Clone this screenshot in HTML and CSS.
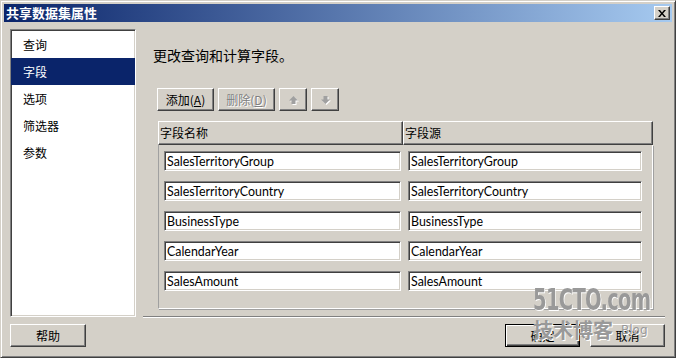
FILE: index.html
```html
<!DOCTYPE html>
<html lang="zh-CN">
<head>
  <meta charset="UTF-8" />
  <meta name="viewport" content="width=device-width, initial-scale=1.0"/>
  <title>共享数据集属性</title>
  <link rel="stylesheet" href="styles.css">
</head>
<body>
  <div class="window">
    <div class="titlebar">
      <span class="title">共享数据集属性</span>
      <button class="close" aria-label="关闭">
        <svg width="8" height="7" viewBox="0 0 8 7"><path d="M0 0h2l2 2.5 2-2.5h2l-3 3.5 3 3.5h-2l-2-2.5-2 2.5h-2l3-3.5z" fill="#000"/></svg>
      </button>
    </div>

    <div class="main">
      <ul class="nav">
        <li>查询</li>
        <li class="active">字段</li>
        <li>选项</li>
        <li>筛选器</li>
        <li>参数</li>
      </ul>

      <section class="panel">
        <h2 class="heading">更改查询和计算字段。</h2>

        <div class="toolbar">
          <button class="btn btn-tool">添加(<u>A</u>)</button>
          <button class="btn btn-tool" disabled>删除(<u>D</u>)</button>
          <button class="btn btn-arrow" disabled>
            <svg width="9" height="8" viewBox="0 0 9 8"><path d="M4.5 0 9 4.5H6.5V8h-4V4.5H0z" fill="#a0a0a0"/></svg>
          </button>
          <button class="btn btn-arrow" disabled>
            <svg width="9" height="8" viewBox="0 0 9 8"><path d="M4.5 8 9 3.5H6.5V0h-4v3.5H0z" fill="#a0a0a0"/></svg>
          </button>
        </div>

        <div class="grid">
          <div class="grid-head">
            <div class="th th-name">字段名称</div>
            <div class="th th-src">字段源</div>
          </div>
          <div class="grid-body">
            <div class="row">
              <input class="cell cell-name" value="SalesTerritoryGroup" readonly>
              <input class="cell cell-src" value="SalesTerritoryGroup" readonly>
            </div>
            <div class="row">
              <input class="cell cell-name" value="SalesTerritoryCountry" readonly>
              <input class="cell cell-src" value="SalesTerritoryCountry" readonly>
            </div>
            <div class="row">
              <input class="cell cell-name" value="BusinessType" readonly>
              <input class="cell cell-src" value="BusinessType" readonly>
            </div>
            <div class="row">
              <input class="cell cell-name" value="CalendarYear" readonly>
              <input class="cell cell-src" value="CalendarYear" readonly>
            </div>
            <div class="row">
              <input class="cell cell-name" value="SalesAmount" readonly>
              <input class="cell cell-src" value="SalesAmount" readonly>
            </div>
          </div>
        </div>
      </section>
    </div>

    <div class="footer">
      <button class="btn btn-help">帮助</button>
      <div class="footer-right">
        <button class="btn btn-ok">确定</button>
        <button class="btn btn-cancel">取消</button>
      </div>
    </div>

    <!-- blog watermark stamped over the screenshot -->
    <div class="watermark">
      <div class="wm-logo">51CTO.com</div>
      <div class="wm-sub">技术博客<span class="wm-blog">Blog</span></div>
    </div>
  </div>
</body>
</html>
```

FILE: styles.css
```css
body {
  margin: 0;
  background: #d4d0c8;
  font-family: "Noto Sans CJK SC", sans-serif;
  font-size: 12px;
  color: #000;
}

.window {
  position: relative;
  width: 676px;
  height: 358px;
  box-sizing: border-box;
  padding: 3px;
  display: flex;
  flex-direction: column;
  background: #d4d0c8;
  border: 1px solid;
  border-color: #d4d0c8 #404040 #404040 #d4d0c8;
  box-shadow: inset 1px 1px #fff, inset -1px -1px #808080;
  overflow: hidden;
}

/* title bar */
.titlebar {
  height: 18px;
  flex: none;
  display: flex;
  align-items: center;
  justify-content: space-between;
  padding: 0 2px;
  background: linear-gradient(to right, #0a246a, #a6caf0);
}

.title {
  color: #fff;
  font-weight: bold;
  font-size: 13px;
  line-height: 18px;
}

.close {
  width: 16px;
  height: 14px;
  padding: 0;
  display: flex;
  align-items: center;
  justify-content: center;
  background: #d4d0c8;
  border: 1px solid;
  border-color: #fff #404040 #404040 #fff;
  box-shadow: inset -1px -1px #808080;
}

/* body */
.main {
  display: flex;
  gap: 7px;
  height: 288px;
  flex: none;
  margin-top: 7px;
  padding: 0 7px 0 6px;
}

.nav {
  width: 126px;
  box-sizing: border-box;
  margin: 0;
  padding: 1px 0 0;
  list-style: none;
  background: #fff;
  border: 1px solid;
  border-color: #808080 #fff #fff #808080;
  box-shadow: inset 1px 1px #404040, inset -1px -1px #d4d0c8;
}

.nav li {
  height: 27px;
  line-height: 27px;
  padding-left: 12px;
}

.nav li.active {
  background: #0a246a;
  color: #fff;
}

.panel {
  flex: 1;
  box-sizing: border-box;
  border-bottom: 1px solid #808080;
  box-shadow: 0 1px #fff;
}

.heading {
  margin: 16px 0 0 10px;
  font-size: 14px;
  font-weight: normal;
  line-height: 20px;
}

.toolbar {
  display: flex;
  gap: 4px;
  margin: 23px 0 0 14px;
}

.btn {
  height: 23px;
  padding: 0;
  font-family: inherit;
  font-size: 12px;
  color: #000;
  background: #d4d0c8;
  border: 1px solid;
  border-color: #fff #404040 #404040 #fff;
  box-shadow: inset -1px -1px #808080;
}

.btn:disabled {
  color: #808080;
  text-shadow: 1px 1px #fff;
}

.btn-tool {
  width: 57px;
}

.btn-arrow {
  width: 28px;
  display: flex;
  align-items: center;
  justify-content: center;
}

.btn-arrow svg {
  filter: drop-shadow(1px 1px 0 #fff);
}

/* fields grid */
.grid {
  width: 495px;
  margin: 10px 0 0 15px;
}

.grid-head {
  display: flex;
  height: 24px;
}

.th {
  box-sizing: border-box;
  padding-left: 1px;
  line-height: 22px;
  border: 1px solid;
  border-color: #fff #404040 #404040 #fff;
  box-shadow: inset -1px -1px #808080;
}

.th-name {
  width: 245px;
}

.th-src {
  flex: 1;
}

.grid-body {
  height: 164px;
  box-sizing: border-box;
  display: flex;
  flex-direction: column;
  gap: 10px;
  padding: 6px 0 0 5px;
  border: 1px solid;
  border-top: 0;
  border-color: #808080 #fff #fff #a0a0a0;
  box-shadow: 1px 1px #a0a0a0;
}

.row {
  display: flex;
  gap: 7px;
}

.cell {
  height: 20px;
  box-sizing: border-box;
  margin: 0;
  padding: 0 0 0 2px;
  font-family: Lato, "Noto Sans", sans-serif;
  font-size: 12.4px;
  color: #000;
  background: #fff;
  border: 1px solid;
  border-color: #808080 #fff #fff #808080;
  box-shadow: inset 1px 1px #404040, inset -1px -1px #d4d0c8;
  outline: none;
}

.cell-name {
  width: 237px;
}

.cell-src {
  width: 234px;
}

/* footer */
.footer {
  display: flex;
  justify-content: space-between;
  margin-top: 7px;
  padding: 0 7px 0 6px;
}

.footer-right {
  display: flex;
  gap: 10px;
}

.btn-help {
  width: 76px;
}

.btn-ok,
.btn-cancel {
  width: 75px;
}

.btn-ok {
  border-color: #000;
  box-shadow: inset 1px 1px #fff, inset -1px -1px #404040, inset -2px -2px #808080;
}

/* watermark */
.watermark {
  position: absolute;
  left: 532px;
  top: 283px;
  color: #999;
  pointer-events: none;
}

.wm-logo {
  font-family: "DejaVu Sans Condensed", sans-serif;
  font-weight: bold;
  font-size: 31px;
  line-height: 30px;
  letter-spacing: -1px;
  transform: scaleX(0.7);
  transform-origin: left;
  text-shadow: 1px 1px #fff;
}

.wm-sub {
  margin-top: 3px;
  font-size: 20px;
  font-weight: bold;
  line-height: 26px;
  text-shadow: 1px 1px #fff;
}

.wm-blog {
  margin-left: 8px;
  font-family: "DejaVu Sans", sans-serif;
  font-size: 12px;
  font-weight: normal;
  vertical-align: top;
}
```
